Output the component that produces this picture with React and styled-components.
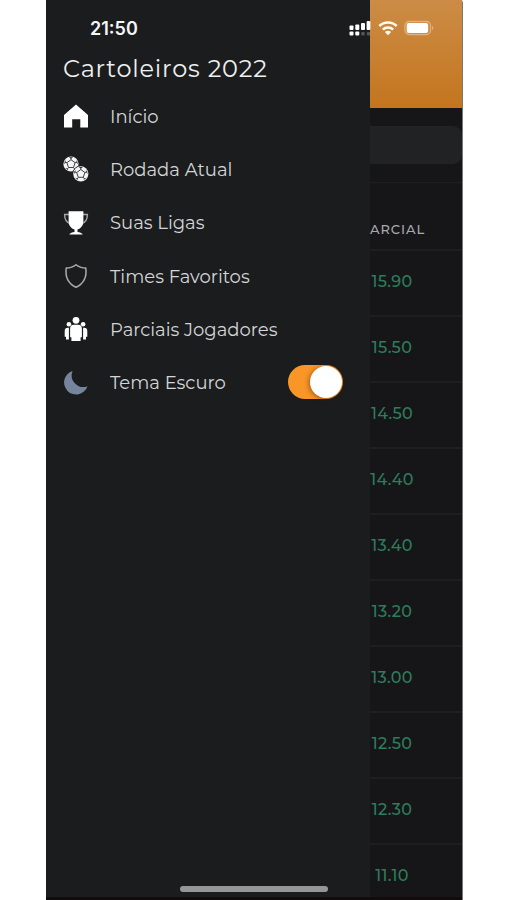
import { useState } from "react";
import styled, { createGlobalStyle } from "styled-components";

const GlobalStyle = createGlobalStyle`
  * {
    box-sizing: border-box;
  }

  body {
    margin: 0;
    background-color: #ffffff;
    font-family: Montserrat, Inter, sans-serif;
  }
`;

const Page = styled.div`
  height: 900px;
  display: flex;
  padding-left: 46px;
  overflow: hidden;
`;

const Phone = styled.div`
  position: relative;
  width: 416px;
  height: 900px;
  display: flex;
  overflow: hidden;
  background-color: #161618;
  box-shadow: 0 0 1px 0.5px #777777;
`;

const Drawer = styled.aside`
  width: 324px;
  flex-shrink: 0;
  padding: 53px 0 0 17px;
  background-color: #1b1c1e;
`;

const Title = styled.h1`
  margin: 0;
  height: 30px;
  line-height: 31px;
  font-size: 24px;
  font-weight: 400;
  letter-spacing: 0.8px;
  white-space: nowrap;
  color: #eef0f1;
`;

const Menu = styled.nav`
  display: flex;
  flex-direction: column;
  margin-top: 6.5px;
`;

const MenuItem = styled.div`
  height: 53.3px;
  display: flex;
  align-items: center;
  padding-right: 27px;

  svg {
    flex-shrink: 0;
  }
`;

const Label = styled.span`
  margin-left: 21px;
  padding-top: 1px;
  flex: 1;
  font-size: 18px;
  line-height: 24px;
  white-space: nowrap;
  color: #d3d5d6;
`;

const Switch = styled.button`
  width: 55px;
  height: 34px;
  margin-bottom: 1px;
  padding: 1px;
  display: flex;
  justify-content: ${({ $on }) => ($on ? "flex-end" : "flex-start")};
  border: 0;
  border-radius: 17px;
  background-color: ${({ $on }) => ($on ? "#fa9528" : "#444648")};
`;

const Knob = styled.span`
  width: 32px;
  height: 32px;
  border-radius: 50%;
  background-color: #ffffff;
  box-shadow: -1px 1px 5px rgba(70, 35, 0, 0.5);
`;

const Content = styled.main`
  flex: 1;
  min-width: 0;
  overflow: hidden;
`;

const Banner = styled.div`
  height: 108px;
  background: linear-gradient(#cc8c46, #c4751e);
`;

const SearchArea = styled.div`
  height: 75px;
  padding-top: 18px;
  border-bottom: 1px solid #1f1f21;
`;

const SearchBox = styled.div`
  height: 38px;
  border-radius: 0 9px 9px 0;
  background-color: #202224;
`;

const ColumnHead = styled.div`
  height: 68px;
  padding-top: 36px;
  border-bottom: 2px solid #1e1e20;
  font-size: 13px;
  line-height: 20px;
  font-weight: 500;
  letter-spacing: 0.95px;
  color: #a8a8aa;
`;

const ScoreRow = styled.div`
  height: 66px;
  padding-top: 20px;
  border-bottom: 2px solid #1e1e20;
`;

const Score = styled.div`
  width: 44px;
  display: flex;
  justify-content: center;
  font-size: 16px;
  line-height: 21px;
  font-weight: 500;
  letter-spacing: 0.35px;
  color: #2d7d5b;
`;

const StatusBar = styled.div`
  position: absolute;
  top: 0;
  left: 0;
  width: 100%;
  height: 56px;
  display: flex;
  align-items: center;
  padding: 0 27px 0 44px;
`;

const Clock = styled.span`
  flex: 1;
  padding-top: 1px;
  font-family: Inter, sans-serif;
  font-size: 18px;
  font-weight: 600;
  color: #f5f6f6;
`;

const StatusIcons = styled.div`
  display: flex;
  align-items: center;
  gap: 6px;
`;

const HomeBar = styled.div`
  position: absolute;
  bottom: 8px;
  left: 134px;
  width: 148px;
  height: 6px;
  border-radius: 3px;
  background-color: #969697;
`;

const BottomEdge = styled.div`
  position: absolute;
  bottom: 0;
  left: 0;
  width: 100%;
  height: 3px;
  background-color: #120b0e;
`;

const HomeIcon = () => (
  <svg width="26" height="26" viewBox="0 0 26 26">
    <path d="M13 1.6 25 12v12.5h-7.7v-8.2H9.2v8.2H1V12z" fill="#ffffff" />
  </svg>
);

const Ball = ({ x, y }) => (
  <g transform={`translate(${x} ${y})`}>
    <circle r="7.6" fill="#f4f4f4" />
    <path
      d="M0-4.3 4.1-1.3 2.5 3.5H-2.5L-4.1-1.3zM0-4.3V-6.5M4.1-1.3 6.4-2.1M2.5 3.5 3.9 5.4M-2.5 3.5-3.9 5.4M-4.1-1.3-6.4-2.1"
      fill="none"
      stroke="#404245"
      strokeWidth="1"
    />
    <path
      d="M-2.2-6.7H2.2L0-5.3zM5.5-4.1 7 .2 5.4-1.3zM5.8 3.9 2.4 6.5 3.7 4.4zM-5.8 3.9-2.4 6.5-3.7 4.4zM-5.5-4.1-7 .2-5.4-1.3z"
      fill="#303235"
    />
  </g>
);

const BallsIcon = () => (
  <svg width="26" height="26" viewBox="0 0 26 26">
    <Ball x={8} y={8} />
    <circle cx="17.8" cy="17.8" r="8.300" fill="#1b1c1e" />
    <Ball x={17.8} y={17.8} />
  </svg>
);

const TrophyIcon = () => (
  <svg width="26" height="26" viewBox="0 0 26 26">
    <path
      d="M6 4.5H1.6c0 5.5 1.8 8.5 6.4 9.3M20 4.5h4.4c0 5.5-1.8 8.5-6.4 9.3"
      fill="none"
      stroke="#a5a6a7"
      strokeWidth="1.4"
    />
    <path
      d="M5.6 1.3H20.4V11c0 4.6-2.6 7.500-5.900 8.500v2.400c2.300.2 4.200 1 5.300 2.600H6.200c1.100-1.600 3-2.400 5.300-2.600v-2.400C8.200 18.500 5.600 15.600 5.600 11z"
      fill="#ffffff"
    />
  </svg>
);

const ShieldIcon = () => (
  <svg width="26" height="26" viewBox="0 0 26 26">
    <path
      d="M13 1.8c2.7 2.3 5.9 3.3 9.8 3.3C24 14 20.5 20.7 13 24.3 5.5 20.7 2 14 3.2 5.1 7.1 5.1 10.3 4.1 13 1.8z"
      fill="none"
      stroke="#aaabac"
      strokeWidth="1.5"
      strokeLinejoin="round"
    />
  </svg>
);

const PlayersIcon = () => (
  <svg width="26" height="26" viewBox="0 0 26 26" fill="#ffffff">
    <circle cx="13" cy="4.300" r="3.400" />
    <circle cx="5.900" cy="8.200" r="2.300" />
    <circle cx="20.100" cy="8.200" r="2.300" />
    <path d="M11 8.800h4a3.900 3.900 0 0 1 3.900 3.900v8.500h-1.300v3.900H8.400v-3.900H7.100v-8.500A3.900 3.900 0 0 1 11 8.800z" />
    <path d="M5.900 11.800V23.500H3v-2.700H1.700v-5.700a3.300 3.300 0 0 1 3.300-3.300zM20.100 11.800V23.500H23v-2.700h1.300v-5.700a3.300 3.300 0 0 0-3.300-3.300z" />
  </svg>
);

const MoonIcon = () => (
  <svg width="26" height="26" viewBox="0 0 26 26">
    <path d="M9.600 1A12 12 0 1 0 24.500 16.200 11.600 11.600 0 0 1 9.600 1z" fill="#77849d" />
  </svg>
);

const SignalIcon = () => (
  <svg width="23" height="16" viewBox="0 0 23 16" fill="#ffffff">
    <rect x="0.5" y="5.500" width="4" height="4.500" rx="1" />
    <rect x="6.300" y="4.500" width="4" height="5.500" rx="1" />
    <rect x="12" y="3" width="4" height="7" rx="1" />
    <rect x="17.600" y="1" width="3.800" height="9" rx="1" />
    <rect x="0.500" y="11.500" width="4" height="4" rx="1" />
    <rect x="6.300" y="11.500" width="4" height="4" rx="1" />
    <rect x="12.300" y="12" width="3.400" height="3.400" rx="1" opacity="0.250" />
    <rect x="17.800" y="12" width="3.400" height="3.400" rx="1" opacity="0.250" />
  </svg>
);

const WifiIcon = () => (
  <svg width="20" height="16" viewBox="0 0 20 16">
    <g fill="none" stroke="#fffaf0" strokeWidth="2.500">
      <path d="M1.300 6a12.400 12.400 0 0 1 17.400 0" />
      <path d="M4.800 9.600a7.400 7.400 0 0 1 10.400 0" />
    </g>
    <path d="M10 15.200 6.900 12a4.400 4.400 0 0 1 6.200 0z" fill="#fffaf0" />
  </svg>
);

const BatteryIcon = () => (
  <svg width="31" height="16" viewBox="0 0 31 16">
    <rect x="1" y="1.500" width="25.500" height="13" rx="4" fill="none" stroke="#dfb180" strokeWidth="1.300" />
    <rect x="2.700" y="3" width="21.500" height="10" rx="2" fill="#ffffff" />
    <path d="M28 6c1.900.7 1.900 3.300 0 4z" fill="#dfb180" />
  </svg>
);

const menuItems = [
  { label: "Início", icon: HomeIcon },
  { label: "Rodada Atual", icon: BallsIcon },
  { label: "Suas Ligas", icon: TrophyIcon },
  { label: "Times Favoritos", icon: ShieldIcon },
  { label: "Parciais Jogadores", icon: PlayersIcon },
];

const scores = ["15.90", "15.50", "14.50", "14.40", "13.40", "13.20", "13.00", "12.50", "12.30", "11.10"];

const App = () => {
  const [dark, setDark] = useState(true);

  return (
    <Page>
      <GlobalStyle />
      <Phone>
        <Drawer>
          <Title>Cartoleiros 2022</Title>
          <Menu>
            {menuItems.map(({ label, icon: Icon }) => (
              <MenuItem key={label}>
                <Icon />
                <Label>{label}</Label>
              </MenuItem>
            ))}
            <MenuItem>
              <MoonIcon />
              <Label>Tema Escuro</Label>
              <Switch $on={dark} onClick={() => setDark(!dark)}>
                <Knob />
              </Switch>
            </MenuItem>
          </Menu>
        </Drawer>
        <Content>
          <Banner />
          <SearchArea>
            <SearchBox />
          </SearchArea>
          <ColumnHead>ARCIAL</ColumnHead>
          {scores.map((score) => (
            <ScoreRow key={score}>
              <Score>{score}</Score>
            </ScoreRow>
          ))}
        </Content>
        <StatusBar>
          <Clock>21:50</Clock>
          <StatusIcons>
            <SignalIcon />
            <WifiIcon />
            <BatteryIcon />
          </StatusIcons>
        </StatusBar>
        <BottomEdge />
        <HomeBar />
      </Phone>
    </Page>
  );
};

export default App;
